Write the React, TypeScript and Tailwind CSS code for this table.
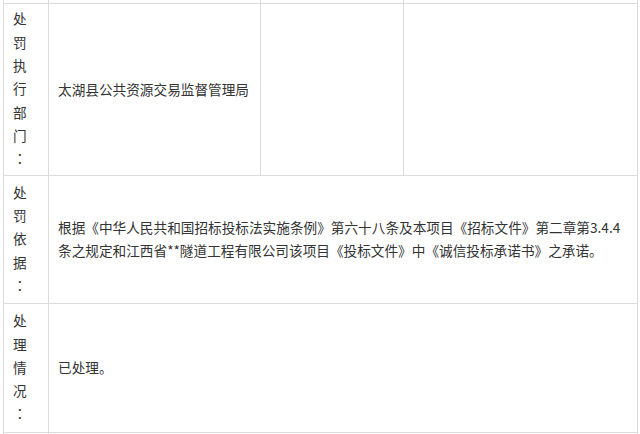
const cell = "border border-[#dcdcdc] align-middle";
const label = "border border-[#dcdcdc] align-middle pl-[9px] pr-[20px] py-0 break-all";

function Label({ text }: { text: string }) {
  return (
    <div className="w-[15px] leading-[23.3px]">
      {text.split("").map((ch, i) =>
        ch === "：" ? (
          <div key={i} style={{ fontFamily: '"Noto Sans CJK TC", sans-serif' }}>
            {ch}
          </div>
        ) : (
          <div key={i}>{ch}</div>
        )
      )}
    </div>
  );
}

export default function App() {
  return (
    <div
      className="w-[640px] h-[434px] overflow-hidden bg-white text-[#333] text-[13.65px]"
      style={{ fontFamily: '"Microsoft YaHei", "Noto Sans CJK SC", sans-serif' }}
    >
      <table className="ml-[3px] w-[634px] table-fixed border-collapse">
        <colgroup>
          <col className="w-[45px]" />
          <col className="w-[212px]" />
          <col className="w-[143px]" />
          <col className="w-[234px]" />
        </colgroup>
        <tbody>
          {/* tail of the row above */}
          <tr className="h-[3px]">
            <td className="border-x border-b border-[#dcdcdc] p-0 leading-none text-[0px]" />
            <td className="border-x border-b border-[#dcdcdc] p-0 leading-none text-[0px]" />
            <td className="border-x border-b border-[#dcdcdc] p-0 leading-none text-[0px]" />
            <td className="border-x border-b border-[#dcdcdc] p-0 leading-none text-[0px]" />
          </tr>
          <tr className="h-[172px]">
            <td className={label}>
              <Label text="处罚执行部门：" />
            </td>
            <td className={`${cell} px-[9px]`}>太湖县公共资源交易监督管理局</td>
            <td className={cell} />
            <td className={cell} />
          </tr>
          <tr className="h-[128px]">
            <td className={label}>
              <Label text="处罚依据：" />
            </td>
            <td colSpan={3} className={`${cell} px-[9px] leading-[23.3px]`}>
              根据《中华人民共和国招标投标法实施条例》第六十八条及本项目《招标文件》第二章第3.4.4条之规定和江西省**隧道工程有限公司该项目《投标文件》中《诚信投标承诺书》之承诺。
            </td>
          </tr>
          <tr className="h-[129px]">
            <td className={label}>
              <Label text="处理情况：" />
            </td>
            <td colSpan={3} className={`${cell} px-[9px]`}>
              已处理。
            </td>
          </tr>
          <tr className="h-[40px]">
            <td className={cell} />
            <td colSpan={3} className={cell} />
          </tr>
        </tbody>
      </table>
    </div>
  );
}
